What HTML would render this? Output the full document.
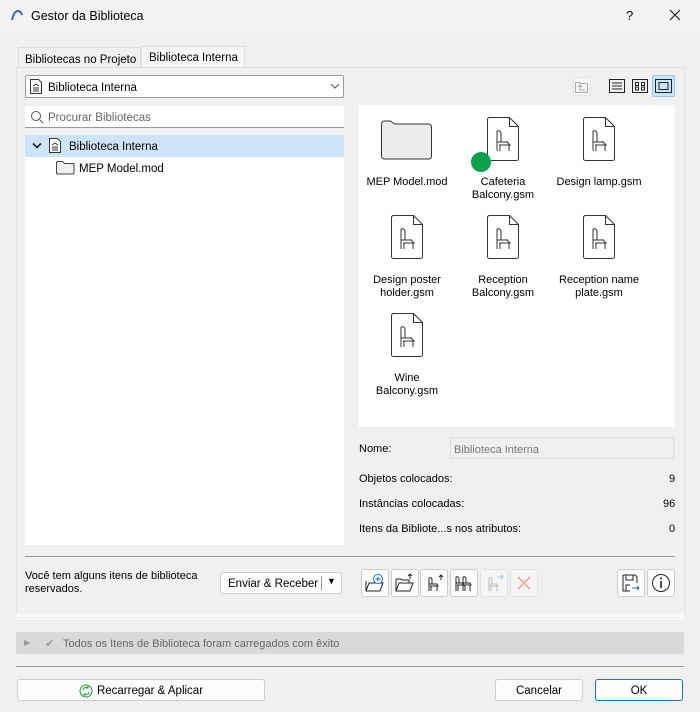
<!DOCTYPE html>
<html><head><meta charset="utf-8"><style>
*{box-sizing:border-box}
body{margin:0;width:700px;height:712px;background:#f0f0f0;font-family:"Liberation Sans",sans-serif;font-size:11px;color:#000;position:relative;overflow:hidden}
.a{position:absolute}
.btn{position:absolute;background:#fdfdfd;border:1px solid #ccc;border-radius:3px;display:flex;align-items:center;justify-content:center;font-size:11.5px;padding-top:1px}
.ib{position:absolute;width:28px;height:28px;background:#fdfdfd;border:1px solid #ccc;border-radius:3px;top:569px}
.it{position:absolute;width:100px;text-align:center;font-size:11px;line-height:13px}
</style></head><body>
<div class="a" style="left:0;top:0;width:700px;height:32px;background:#f3f3f3"></div>
<svg class="a" style="left:10px;top:9px" width="14" height="12"><path d="M2 11 Q4 2 8 2 Q11 2 12 6" fill="none" stroke="#3a5fcd" stroke-width="2"/></svg>
<div class="a" style="left:31px;top:9px;font-size:12.5px">Gestor da Biblioteca</div>
<div class="a" style="left:626px;top:8px;font-size:13px">?</div>
<svg class="a" style="left:669px;top:9px" width="12" height="12"><path d="M1 1l10 10M11 1L1 11" stroke="#222" stroke-width="1.2"/></svg>

<div class="a" style="left:18px;top:47px;width:123px;height:21px;border:1px solid #ddd;border-bottom:none;padding:6px 0 0 6px;font-size:11.5px">Bibliotecas no Projeto</div>
<div class="a" style="left:141px;top:46px;width:104px;height:22px;border:1px solid #ddd;border-bottom:none;background:#f5f5f5;padding:5px 0 0 7px;font-size:11.5px">Biblioteca Interna</div>
<div class="a" style="left:16px;top:67px;width:669px;height:546px;border:1px solid #e0e0e0;border-bottom:none"></div>

<div class="a" style="left:25px;top:75px;width:319px;height:23px;background:#fff;border:1px solid #999;border-radius:2px"></div>
<svg class="a" style="left:29px;top:78px" width="14" height="17"><path d="M1.5 1.5h8l3 3v11h-11z" fill="#fff" stroke="#333"/><path d="M4 8l3-2 3 2M4 13h6M5 9v3M7 9v3M9 9v3" stroke="#333" fill="none"/></svg>
<div class="a" style="left:48px;top:82px;font-size:11.5px">Biblioteca Interna</div>
<svg class="a" style="left:330px;top:83px" width="10" height="7"><path d="M1 1l4 4 4-4" fill="none" stroke="#555"/></svg>

<div class="a" style="left:25px;top:106px;width:319px;height:22px;background:#fff;border-bottom:1px solid #999"></div>
<svg class="a" style="left:30px;top:110px" width="14" height="14"><circle cx="6" cy="6" r="4.5" fill="none" stroke="#555"/><path d="M9.5 9.5l3.5 3.5" stroke="#555"/></svg>
<div class="a" style="left:48px;top:112px;font-size:11.5px;color:#666">Procurar Bibliotecas</div>

<div class="a" style="left:25px;top:135px;width:319px;height:410px;background:#fff"></div>
<div class="a" style="left:25px;top:135px;width:319px;height:22px;background:#cce4f7"></div>
<svg class="a" style="left:32px;top:142px" width="10" height="8"><path d="M1 1.5l4 4 4-4" fill="none" stroke="#222" stroke-width="1.6"/></svg>
<svg class="a" style="left:48px;top:137px" width="14" height="17"><path d="M1.5 1.5h8l3 3v11h-11z" fill="#fff" stroke="#333"/><path d="M4 8l3-2 3 2M4 13h6M5 9v3M7 9v3M9 9v3" stroke="#333" fill="none"/></svg>
<div class="a" style="left:69px;top:141px;font-size:11.5px">Biblioteca Interna</div>
<svg class="a" style="left:56px;top:160px" width="19" height="15"><path d="M.5 2.5a1 1 0 011-1h5l2 2h8.5a1 1 0 011 1v8.5a1 1 0 01-1 1h-15.5a1 1 0 01-1-1z" fill="#f0f0f0" stroke="#444"/></svg>
<div class="a" style="left:79px;top:163px;font-size:11.5px">MEP Model.mod</div>

<div class="a" style="left:573px;top:77px;width:18px;height:19px;border:1px solid #e4e4e4;border-radius:2px;background:#f6f6f6"></div>
<svg class="a" style="left:575px;top:81px" width="14" height="12"><path d="M.5 1.5h4l1 1h7v9h-12z" fill="none" stroke="#aaa"/><path d="M5 9h5M5 9V5M3 6l2-2 2 2" fill="none" stroke="#aaa"/></svg>
<svg class="a" style="left:609px;top:79px" width="16" height="14"><rect x=".5" y=".5" width="15" height="13" fill="none" stroke="#222"/><path d="M3 4h10M3 7h10M3 10h10" stroke="#222"/></svg>
<svg class="a" style="left:632px;top:79px" width="16" height="14"><rect x=".5" y=".5" width="15" height="13" fill="none" stroke="#222"/><rect x="3.5" y="3.5" width="3" height="3" fill="none" stroke="#222"/><rect x="9.5" y="3.5" width="3" height="3" fill="none" stroke="#222"/><rect x="3.5" y="8" width="3" height="3" fill="none" stroke="#222"/><rect x="9.5" y="8" width="3" height="3" fill="none" stroke="#222"/></svg>
<div class="a" style="left:652px;top:75px;width:23px;height:22px;background:#cce4f7;border:1px solid #99c9ef;border-radius:2px"></div>
<svg class="a" style="left:655px;top:79px" width="17" height="14"><rect x=".5" y=".5" width="16" height="13" fill="none" stroke="#222"/><rect x="4" y="3.5" width="9" height="7" fill="none" stroke="#222"/></svg>

<div class="a" style="left:359px;top:105px;width:316px;height:322px;background:#fff"></div>
<svg class="a" style="left:381px;top:120px" width="52" height="40"><path d="M.5 4a3 3 0 013-3h6l4 3h34a3 3 0 013 3v29a3 3 0 01-3 3h-44a3 3 0 01-3-3z" fill="#ececec" stroke="#333"/></svg>
<div class="it" style="left:357px;top:176px">MEP Model.mod</div>
<div class="it" style="left:453px;top:176px">Cafeteria<br>Balcony.gsm</div>
<div class="it" style="left:549px;top:176px">Design lamp.gsm</div>
<div class="it" style="left:357px;top:274px">Design poster<br>holder.gsm</div>
<div class="it" style="left:453px;top:274px">Reception<br>Balcony.gsm</div>
<div class="it" style="left:549px;top:274px">Reception name<br>plate.gsm</div>
<div class="it" style="left:357px;top:372px">Wine<br>Balcony.gsm</div>
<svg width="0" height="0" style="position:absolute"><defs><g id="f"><path d="M2.5 .5h20l9 9v32a2 2 0 01-2 2h-27a2 2 0 01-2-2v-39a2 2 0 012-2z" fill="#fff" stroke="#333"/><path d="M22.5.5v9h9" fill="none" stroke="#333"/><path d="M10 14v20M10 14q4-1 4 3v8M10 25h10l3 3h-11M13 28v6M22 28v6M20 25v-1" fill="none" stroke="#333"/></g></defs></svg>
<svg class="a" style="left:487px;top:117px" width="33" height="45"><use href="#f"/></svg>
<svg class="a" style="left:583px;top:117px" width="33" height="45"><use href="#f"/></svg>
<svg class="a" style="left:391px;top:215px" width="33" height="45"><use href="#f"/></svg>
<svg class="a" style="left:487px;top:215px" width="33" height="45"><use href="#f"/></svg>
<svg class="a" style="left:583px;top:215px" width="33" height="45"><use href="#f"/></svg>
<svg class="a" style="left:391px;top:313px" width="33" height="45"><use href="#f"/></svg>
<div class="a" style="left:471px;top:152px;width:20px;height:20px;border-radius:50%;background:#0ca14a"></div>

<div class="a" style="left:359px;top:443px">Nome:</div>
<div class="a" style="left:450px;top:437px;width:224px;height:22px;border:1px solid #ddd;background:#f0f0f0;color:#777;padding:6px 3px">Biblioteca Interna</div>
<div class="a" style="left:359px;top:473px">Objetos colocados:</div><div class="a" style="left:669px;top:473px">9</div>
<div class="a" style="left:359px;top:498px">Instâncias colocadas:</div><div class="a" style="left:663px;top:498px">96</div>
<div class="a" style="left:359px;top:523px">Itens da Bibliote...s nos atributos:</div><div class="a" style="left:669px;top:523px">0</div>

<div class="a" style="left:25px;top:556px;width:650px;height:1px;background:#999"></div>
<div class="a" style="left:25px;top:570px;line-height:13px">Você tem alguns itens de biblioteca<br>reservados.</div>
<div class="btn" style="left:220px;top:572px;width:122px;height:22px;justify-content:flex-start;padding-left:7px">Enviar &amp; Receber<span style="position:absolute;left:100px;top:3px;width:1px;height:14px;background:#999"></span><span style="position:absolute;left:106px;top:3px;font-size:9px">▼</span></div>
<div class="ib" style="left:361px"></div><div class="ib" style="left:391px"></div><div class="ib" style="left:420px"></div><div class="ib" style="left:450px"></div>
<div class="ib" style="left:480px;border-color:#e4e4e4;background:#f5f5f5"></div><div class="ib" style="left:510px;border-color:#e4e4e4;background:#f5f5f5"></div>
<div class="ib" style="left:617px"></div><div class="ib" style="left:647px"></div>
<svg class="a" style="left:365px;top:573px" width="20" height="20"><path d="M1 8v10h14l3-8H4L1 18" fill="none" stroke="#222"/><circle cx="13" cy="6" r="4.5" fill="#fff" stroke="#1a6fd1"/><path d="M13 3.5v5M10.5 6h5" stroke="#1a6fd1"/></svg>
<svg class="a" style="left:395px;top:573px" width="20" height="20"><path d="M1 6h5l1 1h7v3M1 6v12h14l3-8H4L1 18" fill="none" stroke="#222"/><path d="M15 6V1M13 3l2-2 2 2" fill="none" stroke="#222"/></svg>
<svg class="a" style="left:425px;top:573px" width="20" height="20"><path d="M4 5v13M4 11h8l1 2H5M6 13v5M12 13v5M4 5q3-1 3 2v4" fill="none" stroke="#222"/><path d="M16 7V2M14 4l2-2 2 2" fill="none" stroke="#222"/></svg>
<svg class="a" style="left:453px;top:573px" width="22" height="20"><path d="M3 4v14M3 10h7l1 2H4M5 12v6M10 12v6M3 4q3-1 3 2v4M10 4v14M10 10h7l1 2h-7M12 12v6M17 12v6M10 4q3-1 3 2v4" fill="none" stroke="#222"/></svg>
<svg class="a" style="left:485px;top:573px" width="20" height="20"><path d="M4 5v13M4 11h8l1 2H5M6 13v5M12 13v5M4 5q3-1 3 2v4" fill="none" stroke="#bbb"/><path d="M13 4h5M16 2l2 2-2 2" fill="none" stroke="#9cc3ea"/></svg>
<svg class="a" style="left:516px;top:575px" width="16" height="16"><path d="M2 2l12 12M14 2L2 14" stroke="#f4a89c" stroke-width="1.8"/></svg>
<svg class="a" style="left:621px;top:573px" width="20" height="20"><path d="M2 2h12l2 2v6M2 2v16h7" fill="none" stroke="#222"/><path d="M5 2v5h7V2M5 18v-6h4" fill="none" stroke="#222"/><path d="M11 15h7M16 13l2 2-2 2" fill="none" stroke="#1a6fd1"/></svg>
<svg class="a" style="left:651px;top:573px" width="20" height="20"><circle cx="10" cy="10" r="8.5" fill="none" stroke="#222"/><path d="M10 8v7" stroke="#222" stroke-width="1.6"/><circle cx="10" cy="5.5" r="1" fill="#222"/></svg>

<div class="a" style="left:16px;top:613px;width:668px;height:7px;background:#f7f7f7"></div>
<div class="a" style="left:16px;top:632px;width:668px;height:22px;background:#d9d9d9;border-radius:2px"></div>
<div class="a" style="left:24px;top:638px;font-size:8px;color:#999">▶</div>
<div class="a" style="left:45px;top:637px;color:#999">✔</div>
<div class="a" style="left:63px;top:638px;color:#666">Todos os Itens de Biblioteca foram carregados com êxito</div>
<div class="a" style="left:16px;top:666px;width:668px;height:1px;background:#999"></div>
<div class="btn" style="left:17px;top:679px;width:248px;height:22px"><svg width="14" height="14" style="margin-right:4px"><circle cx="7" cy="7" r="6" fill="none" stroke="#1c9c3c"/><path d="M4 6a3 3 0 015-2M10 8a3 3 0 01-5 2M9 2v2H7M5 12v-2h2" fill="none" stroke="#1c9c3c"/></svg>Recarregar &amp; Aplicar</div>
<div class="btn" style="left:495px;top:679px;width:88px;height:22px">Cancelar</div>
<div class="btn" style="left:595px;top:679px;width:88px;height:22px;border-color:#1a6fd1">OK</div>
</body></html>
